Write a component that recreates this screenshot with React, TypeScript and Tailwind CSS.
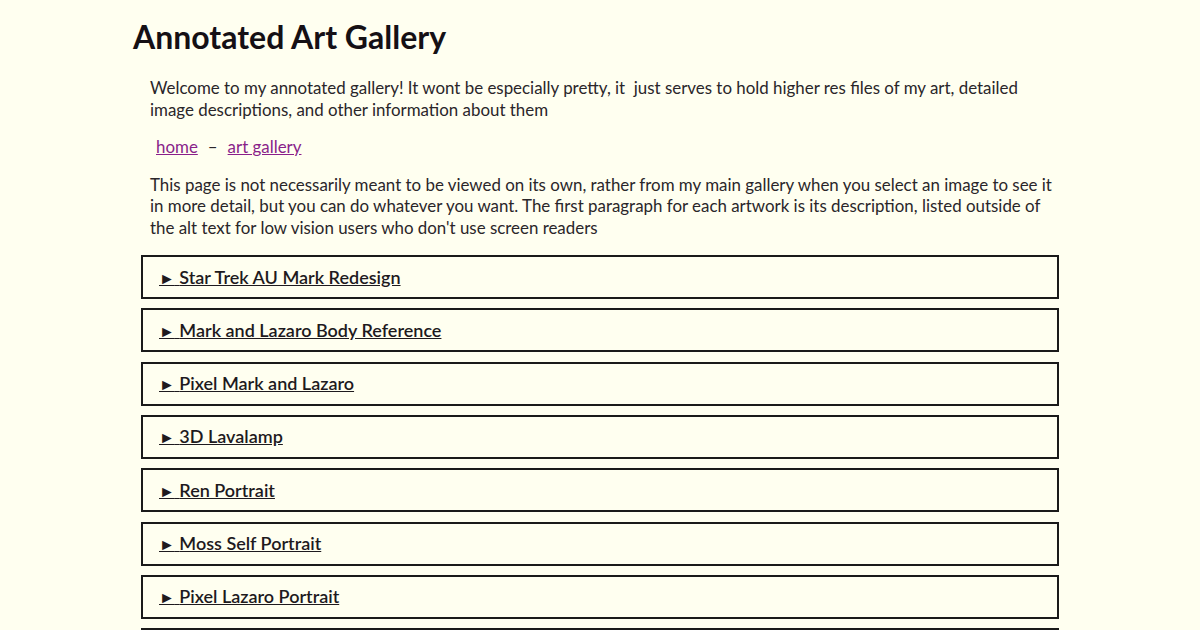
const items = [
  'Star Trek AU Mark Redesign',
  'Mark and Lazaro Body Reference',
  'Pixel Mark and Lazaro',
  '3D Lavalamp',
  'Ren Portrait',
  'Moss Self Portrait',
  'Pixel Lazaro Portrait',
  'Lazaro Sketch',
];

export default function App() {
  return (
    <div className="min-h-[630px] bg-[#fffff0] text-[#1e1a1e] font-['Lato','Noto_Sans',sans-serif]">
      <div className="ml-[133px] w-[930px] pt-[17px]">
        <h1 className="text-[32px] leading-[40px] font-bold text-[#151015]">Annotated Art Gallery</h1>
        <div className="ml-[17px] w-[915px] text-[16.9px] leading-[21.5px] text-[#2a262a]">
          <p className="mt-[20px]">
            Welcome to my annotated gallery! It wont be especially pretty, it&nbsp; just serves to hold higher res files of my
            art, detailed image descriptions, and other information about them
          </p>
          <p className="mt-[16px] ml-[6px]">
            <a href="#" className="underline text-[#8a1f8a]">home</a>
            <span className="mx-[10px]">–</span>
            <a href="#" className="underline text-[#8a1f8a]">art gallery</a>
          </p>
          <p className="mt-[16px]">
            This page is not necessarily meant to be viewed on its own, rather from my main gallery when you select an image
            to see it in more detail, but you can do whatever you want. The first paragraph for each artwork is its
            description, listed outside of the alt text for low vision users who don't use screen readers
          </p>
        </div>
        <div className="ml-[8px] mt-[17px] w-[918px] flex flex-col gap-[9.33px]">
          {items.map((t) => (
            <details key={t} className="border-2 border-[#1a1a1a] h-[44px] px-[16px] flex items-center">
              <summary className="list-none text-[18px] leading-[40px] font-semibold text-[#1e1a1e] underline cursor-pointer">
                <span className="text-[16px]">►</span> {t}
              </summary>
            </details>
          ))}
        </div>
      </div>
    </div>
  );
}
